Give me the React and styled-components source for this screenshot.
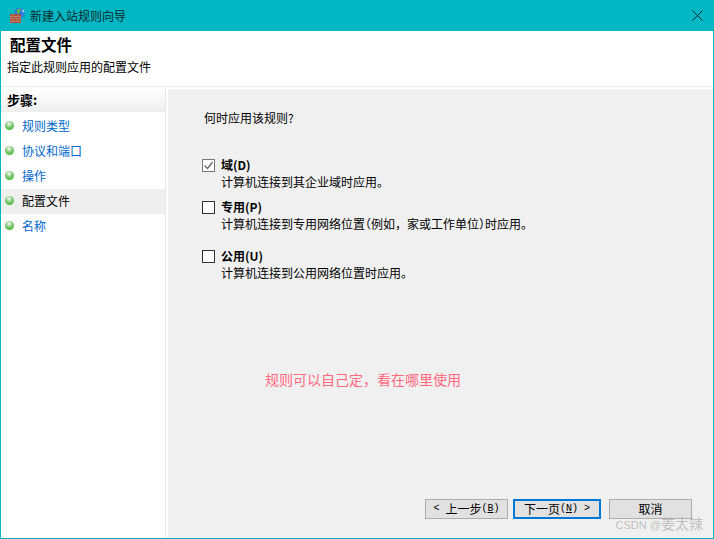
import React from "react";
import styled, { createGlobalStyle } from "styled-components";

const Global = createGlobalStyle`
  html, body { margin: 0; padding: 0; background: #fff; }
  * { box-sizing: border-box; }
`;

const Win = styled.div`
  position: relative;
  width: 714px;
  height: 539px;
  display: flex;
  flex-direction: column;
  border: solid #00b7c3;
  border-width: 0 1px 1px 1px;
  background: #fff;
  overflow: hidden;
  font-family: "Noto Sans CJK SC", "Liberation Sans", sans-serif;
  font-size: 12px;
  color: #000;
`;

const TitleBar = styled.div`
  flex: 0 0 31px;
  margin: 0 -1px;
  display: flex;
  align-items: center;
  padding: 0 11px 0 10px;
  background: #00b7c3;
  color: #10292c;
`;

const TitleText = styled.span`
  margin-left: 5px;
  line-height: 16px;
`;

const CloseIcon = styled.svg`
  margin-left: auto;
  display: block;
`;

const Header = styled.header`
  flex: 0 0 56px;
  padding: 4px 0 0 6px;
  border-bottom: 1px solid #ececec;
`;

const HeaderTitle = styled.div`
  font-size: 15.5px;
  font-weight: 700;
  line-height: 18px;
  padding-left: 3px;
`;

const HeaderSub = styled.div`
  margin-top: 6px;
  line-height: 16px;
`;

const Body = styled.div`
  flex: 1;
  display: flex;
  padding-top: 2px;
`;

const Side = styled.aside`
  flex: 0 0 165px;
  border-right: 1px solid #e6e6e6;
  margin-right: 2px;
  margin-top: -1px;
  padding-top: 1px;
`;

const SideHead = styled.div`
  height: 23px;
  padding: 2px 0 0 6px;
  margin-bottom: 2px;
  font-size: 13px;
  font-weight: 700;
  line-height: 18px;
  background: linear-gradient(#ffffff, #eeeeee);
`;

const Step = styled.div`
  height: 25px;
  display: flex;
  align-items: center;
  padding: 0 0 2px 4px;
  background: ${(p) => (p.$active ? "#efefef" : "transparent")};
  color: ${(p) => (p.$active ? "#000" : "#0066cc")};
`;

const Dot = styled.span`
  width: 9px;
  height: 9px;
  border-radius: 50%;
  margin-right: 8px;
  background: radial-gradient(circle at 45% 30%, #dcefd8 0 12%, #8ccb82 38%, #45bb33 78%);
`;

const Main = styled.main`
  flex: 1;
  display: flex;
  flex-direction: column;
  padding: 20px 21px 19px 36px;
  background: #f0f0f0;
`;

const Question = styled.div`
  line-height: 18px;
  margin-bottom: 29px;
`;

const Option = styled.div`
  display: grid;
  grid-template-columns: 13px 1fr;
  column-gap: 6px;
  margin-left: -2px;
  margin-bottom: ${(p) => p.$gap}px;
`;

const Box = styled.span`
  width: 13px;
  height: 13px;
  margin-top: 3px;
  border: 1px solid ${(p) => (p.$checked ? "#777" : "#333")};
  background: #fff;
  display: block;
`;

const OptLabel = styled.div`
  font-weight: 700;
  line-height: 17px;
`;

const OptDesc = styled.div`
  line-height: 17px;
`;

const HalfParen = styled.span`
  font-feature-settings: "halt";
`;

const Note = styled.div`
  margin: 89px 0 0 61px;
  color: #ff6a7f;
  font-size: 14px;
  line-height: 18px;
`;

const Buttons = styled.div`
  margin-top: auto;
  display: flex;
  justify-content: flex-end;
`;

const Btn = styled.button`
  width: ${(p) => p.$w}px;
  height: 20px;
  margin-left: ${(p) => p.$ml}px;
  padding: 0;
  border: ${(p) => (p.$primary ? "2px solid #0078d7" : "1px solid #adadad")};
  background: #e1e1e1;
  color: #000;
  font: inherit;
  line-height: 16px;
  display: flex;
  align-items: center;
  justify-content: center;
`;

const Mono = styled.span`
  font-family: "Liberation Mono", monospace;
  font-size: 10px;
  white-space: pre;
`;

const Watermark = styled.div`
  position: absolute;
  right: 10px;
  bottom: 4px;
  color: rgba(150, 150, 150, 0.55);
  font-size: 14px;
  line-height: 17px;
`;

const WatermarkLatin = styled.span`
  font-family: "Liberation Sans", sans-serif;
  font-size: 11px;
`;

const steps = ["规则类型", "协议和端口", "操作", "配置文件", "名称"];

const FirewallIcon = () => (
  <svg width="15" height="15" viewBox="0 0 15 15">
    <circle cx="9.5" cy="5" r="5.2" fill="#2f7fd6" />
    <path d="M7 2l2.5-1.5 1.5 1.5-1.5 1.5L9 5.5 7 5z" fill="#63bb44" />
    <path d="M12 1a5 5 0 0 1 2.5 3l-1.5.3z" fill="#d7ebfb" />
    <rect x="0" y="6" width="11" height="9" fill="#a84e36" />
    <path d="M0 8.5h11M0 11h11M0 13.5h11M3 6v2.5M8 6v2.5M1.5 8.5V11M6 8.5V11M10 8.5V11M3 11v2.5M8 11v2.5" stroke="#d29a82" strokeWidth="0.6" fill="none" />
  </svg>
);

export default function App() {
  return (
    <Win>
      <Global />
      <TitleBar>
        <FirewallIcon />
        <TitleText>新建入站规则向导</TitleText>
        <CloseIcon width="11" height="11" viewBox="0 0 11 11">
          <path d="M.5.5l10 10M10.5.5l-10 10" stroke="#0b2b30" strokeWidth="1" fill="none" />
        </CloseIcon>
      </TitleBar>
      <Header>
        <HeaderTitle>配置文件</HeaderTitle>
        <HeaderSub>指定此规则应用的配置文件</HeaderSub>
      </Header>
      <Body>
        <Side>
          <SideHead>步骤:</SideHead>
          {steps.map((s) => (
            <Step key={s} $active={s === "配置文件"}>
              <Dot />
              {s}
            </Step>
          ))}
        </Side>
        <Main>
          <Question>何时应用该规则?</Question>
          <Option $gap={8}>
            <Box $checked>
              <svg width="11" height="11" viewBox="0 0 11 11" style={{ display: "block" }}>
                <path d="M1.5 5.5l3 3 5-6.5" stroke="#666" strokeWidth="1.3" fill="none" />
              </svg>
            </Box>
            <div>
              <OptLabel>域(D)</OptLabel>
              <OptDesc>计算机连接到其企业域时应用。</OptDesc>
            </div>
          </Option>
          <Option $gap={15}>
            <Box />
            <div>
              <OptLabel>专用(P)</OptLabel>
              <OptDesc>
                计算机连接到专用网络位置<HalfParen>{"\uFF08"}</HalfParen>例如{"\uFF0C"}家或工作单位<HalfParen>{"\uFF09"}</HalfParen>时应用。
              </OptDesc>
            </div>
          </Option>
          <Option $gap={0}>
            <Box />
            <div>
              <OptLabel>公用(U)</OptLabel>
              <OptDesc>计算机连接到公用网络位置时应用。</OptDesc>
            </div>
          </Option>
          <Note>规则可以自己定{"\uFF0C"}看在哪里使用</Note>
          <Buttons>
            <Btn $w={83} $ml={0}>
              <Mono>{"< "}</Mono>上一步<Mono>(<u>B</u>)</Mono>
            </Btn>
            <Btn $w={88} $ml={5} $primary>
              下一页<Mono>(<u>N</u>) {">"}</Mono>
            </Btn>
            <Btn $w={83} $ml={8}>取消</Btn>
          </Buttons>
        </Main>
      </Body>
      <Watermark>
        <WatermarkLatin>CSDN @</WatermarkLatin>姜太辣
      </Watermark>
    </Win>
  );
}
